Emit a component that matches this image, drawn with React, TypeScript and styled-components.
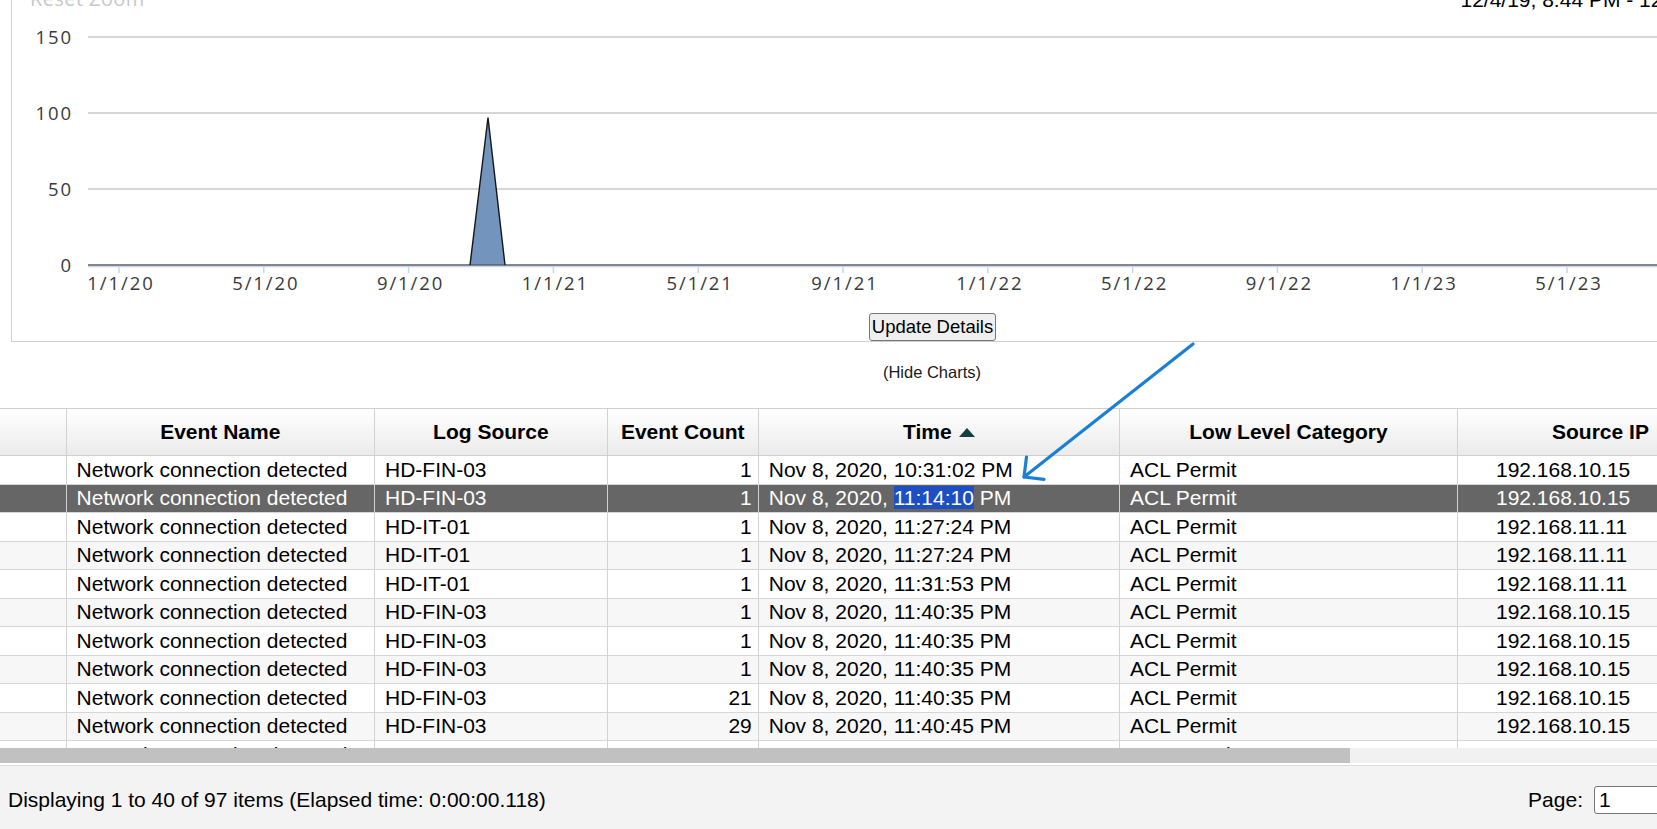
import React from 'react';
import styled, { createGlobalStyle } from 'styled-components';

const GlobalStyle = createGlobalStyle`
  html, body {
    margin: 0;
    padding: 0;
    background: #ffffff;
    overflow: hidden;
  }
  body {
    font-family: "Liberation Sans", Arial, sans-serif;
    color: #000;
  }
`;

const COLUMNS = '66.6px 308.4px 232.7px 151.1px 361.2px 338px 286px 290px';

const Page = styled.div`
  position: relative;
  width: 100%;
  height: 829px;
  overflow: hidden;
`;

/* ---------- chart ---------- */

const ChartPanel = styled.div`
  width: 1842px;
  margin: -12px 0 0 11px;
  box-sizing: border-box;
  border-left: 1px solid #cfcfcf;
  border-bottom: 1px solid #cfcfcf;
`;

const ChartTop = styled.div`
  display: flex;
  justify-content: space-between;
  height: 24px;
  padding: 0 54px 0 18px;
`;

const ResetZoom = styled.span`
  font-family: "Open Sans", sans-serif;
  font-size: 20px;
  line-height: 22px;
  color: #c8c8c8;
  letter-spacing: 0.4px;
`;

const RangeLabel = styled.span`
  font-size: 21px;
  line-height: 24px;
  color: #000;
  white-space: nowrap;
`;

const ChartSvg = styled.svg`
  display: block;
  width: 1841px;
  height: 301px;

  text {
    font-family: "Open Sans", sans-serif;
    font-size: 18.5px;
    letter-spacing: 1.9px;
    fill: #3a3a3a;
  }
`;

const ButtonRow = styled.div`
  display: flex;
  justify-content: center;
  align-items: flex-end;
  height: 28px;
`;

const UpdateButton = styled.button`
  height: 28px;
  padding: 0 2px;
  font-family: "Liberation Sans", Arial, sans-serif;
  font-size: 18.5px;
  color: #000;
  background: #efefef;
  border: 1px solid #767676;
  border-radius: 3px;
`;

const HideRow = styled.div`
  width: 1864px;
  height: 66px;
  box-sizing: border-box;
  padding-top: 19px;
  text-align: center;
  font-size: 16.5px;
  line-height: 22px;
  color: #1a1a1a;
`;

/* ---------- grid ---------- */

const GridViewport = styled.div`
  width: 100%;
  height: 340px;
  overflow: hidden;
`;

const GridTable = styled.div`
  width: 2034px;
`;

const HeaderRow = styled.div`
  display: grid;
  grid-template-columns: ${COLUMNS};
  height: 48px;
  box-sizing: border-box;
  border-top: 1px solid #cfcfcf;
  border-bottom: 1px solid #cfcfcf;
  background: linear-gradient(#ffffff, #ebebeb);
`;

const HeadCell = styled.div`
  display: flex;
  align-items: center;
  justify-content: center;
  border-right: 1px solid #d2d2d2;
  font-size: 21px;
  font-weight: bold;
  white-space: nowrap;
  overflow: hidden;
`;

const SortUp = styled.span`
  width: 0;
  height: 0;
  margin-left: 7px;
  border-left: 8.5px solid transparent;
  border-right: 8.5px solid transparent;
  border-bottom: 9px solid #173f3c;
`;

const Row = styled.div<{ $selected?: boolean; $shade?: boolean }>`
  display: grid;
  grid-template-columns: ${COLUMNS};
  height: 28.5px;
  box-sizing: border-box;
  border-bottom: 1px solid #d6d6d6;
  background: ${(p) => (p.$selected ? '#666666' : p.$shade ? '#f7f7f7' : '#ffffff')};
  color: ${(p) => (p.$selected ? '#ffffff' : '#000000')};
`;

const Cell = styled.div<{ $align?: 'left' | 'right'; $indent?: number }>`
  display: flex;
  align-items: center;
  justify-content: ${(p) => (p.$align === 'right' ? 'flex-end' : 'flex-start')};
  padding: ${(p) => (p.$align === 'right' ? '0 6px 0 0' : `0 0 0 ${p.$indent ?? 10}px`)};
  border-right: 1px solid #d2d2d2;
  font-size: 21px;
  white-space: nowrap;
  overflow: hidden;
`;

const Selection = styled.span`
  background: #1c4fc4;
  color: #ffffff;
`;

const ScrollTrack = styled.div`
  height: 15px;
  background: #f1f1f1;
`;

const ScrollThumb = styled.div<{ $width: number }>`
  width: ${(p) => p.$width}px;
  height: 100%;
  background: #c1c1c1;
`;

/* ---------- footer ---------- */

const Footer = styled.div`
  margin-top: 2px;
  height: 63px;
  border-top: 1px solid #dcdcdc;
  background: #f3f3f3;
  overflow: hidden;
`;

const FooterInner = styled.div`
  width: 1722px;
  height: 100%;
  box-sizing: border-box;
  padding: 4px 8px 0 8px;
  display: flex;
  align-items: center;
  justify-content: space-between;
  font-size: 21px;
`;

const Pager = styled.div`
  display: flex;
  align-items: center;
  gap: 11px;
`;

const PageInput = styled.input`
  width: 120px;
  height: 28px;
  box-sizing: border-box;
  padding: 0 4px;
  border: 1px solid #767676;
  border-radius: 3px;
  background: #fff;
  font-family: "Liberation Sans", Arial, sans-serif;
  font-size: 21px;
  color: #000;
`;

const ArrowLayer = styled.svg`
  position: absolute;
  top: 0;
  left: 0;
  width: 1657px;
  height: 829px;
  pointer-events: none;
`;

const xLabels = ['1/1/20', '5/1/20', '9/1/20', '1/1/21', '5/1/21', '9/1/21', '1/1/22', '5/1/22', '9/1/22', '1/1/23', '5/1/23', '9/1/23'];
const yLines = [
  { v: 150, y: 25 },
  { v: 100, y: 101 },
  { v: 50, y: 177 },
];

type EventRow = {
  source: string;
  count: number;
  time: string;
  ip: string;
  selected?: boolean;
};

const rows: EventRow[] = [
  { source: 'HD-FIN-03', count: 1, time: '10:31:02', ip: '192.168.10.15' },
  { source: 'HD-FIN-03', count: 1, time: '11:14:10', ip: '192.168.10.15', selected: true },
  { source: 'HD-IT-01', count: 1, time: '11:27:24', ip: '192.168.11.11' },
  { source: 'HD-IT-01', count: 1, time: '11:27:24', ip: '192.168.11.11' },
  { source: 'HD-IT-01', count: 1, time: '11:31:53', ip: '192.168.11.11' },
  { source: 'HD-FIN-03', count: 1, time: '11:40:35', ip: '192.168.10.15' },
  { source: 'HD-FIN-03', count: 1, time: '11:40:35', ip: '192.168.10.15' },
  { source: 'HD-FIN-03', count: 1, time: '11:40:35', ip: '192.168.10.15' },
  { source: 'HD-FIN-03', count: 21, time: '11:40:35', ip: '192.168.10.15' },
  { source: 'HD-FIN-03', count: 29, time: '11:40:45', ip: '192.168.10.15' },
  { source: 'HD-FIN-03', count: 74, time: '11:40:56', ip: '192.168.10.15' },
];

const EventChart = () => (
  <ChartSvg viewBox="0 0 1841 301">
    {yLines.map((l) => (
      <g key={l.v}>
        <line x1={76} x2={1841} y1={l.y} y2={l.y} stroke="#c9c9c9" strokeWidth={1.5} />
        <text x={61} y={l.y} dy="0.36em" textAnchor="end">{l.v}</text>
      </g>
    ))}
    <text x={61} y={253} dy="0.36em" textAnchor="end">0</text>
    <line x1={76} x2={1841} y1={254.5} y2={254.5} stroke="#ccd6eb" strokeWidth={1.5} />
    {xLabels.map((label, i) => {
      const x = 107 + i * 144.8;
      return (
        <g key={label}>
          <line x1={x} x2={x} y1={254} y2={261} stroke="#ccd6eb" strokeWidth={1.5} />
          <text x={x + 2} y={278} textAnchor="middle">{label}</text>
        </g>
      );
    })}
    <path d="M458 253 L476 105.5 L493 253 Z" fill="#7395bd" />
    <path d="M76 253 L1841 253" fill="none" stroke="#5a5f66" strokeWidth={1.3} />
    <path d="M458 253 L476 105.5 L493 253" fill="none" stroke="#151515" strokeWidth={1.4} />
  </ChartSvg>
);

const App = () => {
  return (
    <Page>
      <GlobalStyle />
      <ChartPanel>
        <ChartTop>
          <ResetZoom>Reset Zoom</ResetZoom>
          <RangeLabel>12/4/19, 8:44 PM - 12/4/23, 8:44 PM</RangeLabel>
        </ChartTop>
        <EventChart />
        <ButtonRow>
          <UpdateButton>Update Details</UpdateButton>
        </ButtonRow>
      </ChartPanel>
      <HideRow>(Hide Charts)</HideRow>

      <GridViewport>
        <GridTable>
          <HeaderRow>
            <HeadCell />
            <HeadCell>Event Name</HeadCell>
            <HeadCell>Log Source</HeadCell>
            <HeadCell>Event Count</HeadCell>
            <HeadCell>
              Time
              <SortUp />
            </HeadCell>
            <HeadCell>Low Level Category</HeadCell>
            <HeadCell>Source IP</HeadCell>
            <HeadCell>Source Port</HeadCell>
          </HeaderRow>
          {rows.map((r, i) => (
            <Row key={i} $selected={r.selected} $shade={i % 2 === 1}>
              <Cell />
              <Cell>Network connection detected</Cell>
              <Cell>{r.source}</Cell>
              <Cell $align="right">{r.count}</Cell>
              <Cell>
                {r.selected ? (
                  <span>
                    Nov 8, 2020, <Selection>{r.time}</Selection> PM
                  </span>
                ) : (
                  `Nov 8, 2020, ${r.time} PM`
                )}
              </Cell>
              <Cell>ACL Permit</Cell>
              <Cell $indent={38}>{r.ip}</Cell>
              <Cell />
            </Row>
          ))}
        </GridTable>
      </GridViewport>
      <ScrollTrack>
        <ScrollThumb $width={Math.round((1657 * 1657) / 2034)} />
      </ScrollTrack>

      <Footer>
        <FooterInner>
          <span>Displaying 1 to 40 of 97 items (Elapsed time: 0:00:00.118)</span>
          <Pager>
            <span>Page:</span>
            <PageInput readOnly value="1" />
          </Pager>
        </FooterInner>
      </Footer>

      <ArrowLayer viewBox="0 0 1657 829">
        <g fill="none" stroke="#1b7fd5" strokeWidth={3.2} strokeLinecap="round" strokeLinejoin="round">
          <path d="M1193 344 L1024 477" />
          <path d="M1026.5 457 L1024 477 L1044 479.4" />
        </g>
      </ArrowLayer>
    </Page>
  );
};

export default App;
